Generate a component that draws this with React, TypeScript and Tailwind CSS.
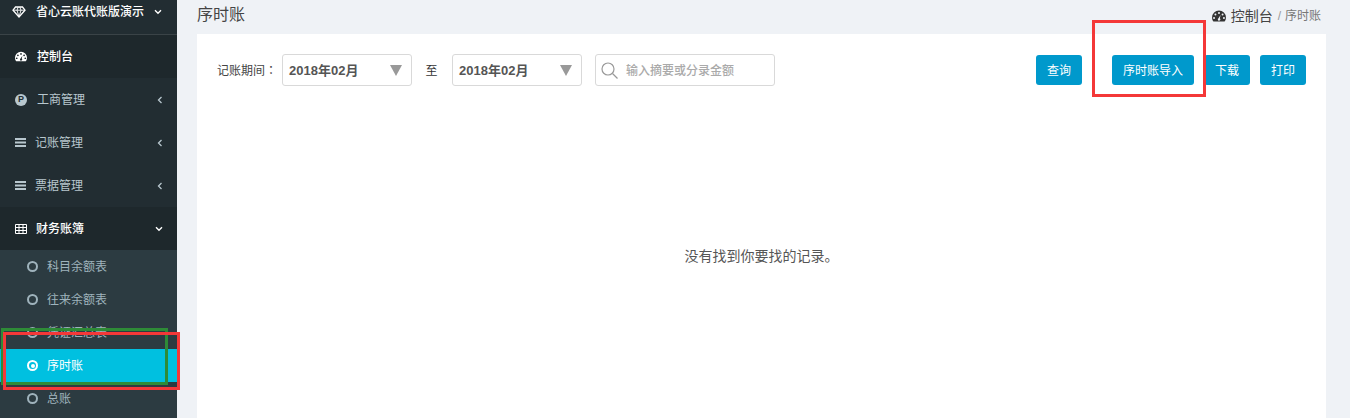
import React from "react";

const Diamond = () => (
  <svg width="14" height="12" viewBox="0 0 14 12" fill="none" stroke="#fff" strokeWidth="1.3">
    <path d="M3.5 1h7L13 4.2 7 11 1 4.2z" />
    <path d="M1 4.2h12M5 4.2 7 11l2-6.8M5 4.2 6.2 1M9 4.2 7.8 1" strokeWidth="0.9" />
  </svg>
);
const Gauge = ({ c = "#fff", s = 13 }: { c?: string; s?: number }) => (
  <svg width={s} height={s * 0.85} viewBox="0 0 14 12">
    <path fill={c} fillRule="evenodd" d="M7 .5A7 7 0 0 0 0 7.5c0 1.6.5 3 1.4 4h11.2c.9-1 1.4-2.4 1.4-4a7 7 0 0 0-7-7zM7 2a1 1 0 1 1 0 2 1 1 0 0 1 0-2zM3.4 3.6a1 1 0 1 1 0 2 1 1 0 0 1 0-2zM10.6 3.6a1 1 0 1 1 0 2 1 1 0 0 1 0-2zM2 7a1 1 0 1 1 0 2 1 1 0 0 1 0-2zM12 7a1 1 0 1 1 0 2 1 1 0 0 1 0-2zM8.6 5 7.9 8.4a1.3 1.3 0 1 1-1.4-.1z" />
  </svg>
);
const Bars = () => (
  <svg width="11" height="9" viewBox="0 0 11 9" fill="#b8c7ce">
    <rect y="0" width="11" height="2" />
    <rect y="3.5" width="11" height="2" />
    <rect y="7" width="11" height="2" />
  </svg>
);
const Table = () => (
  <svg width="12" height="10" viewBox="0 0 12 10" fill="none" stroke="#fff" strokeWidth="1">
    <path d="M.5.5h11v9H.5zM.5 3.5h11M.5 6.5h11M4 .5v9M8 .5v9" />
  </svg>
);
const PIcon = () => (
  <span className="flex h-[12px] w-[12px] items-center justify-center rounded-full bg-[#b8c7ce] text-[9px] font-bold leading-none text-[#222d32]">P</span>
);
const ChevDown = () => (
  <svg width="8" height="6" viewBox="0 0 8 6" fill="none" stroke="#fff" strokeWidth="1.4"><path d="M1 1.2 4 4.2l3-3" /></svg>
);
const ChevLeft = () => (
  <svg width="6" height="8" viewBox="0 0 6 8" fill="none" stroke="#b8c7ce" strokeWidth="1.3"><path d="M4.5 1 1.5 4l3 3" /></svg>
);
const Caret = () => (
  <svg width="12" height="11" viewBox="0 0 12 11" fill="#999"><path d="M0 0h12L6 11z" /></svg>
);

const NavItem = ({ icon, label, dark, white, gap = "mr-[10px]" }: { icon: React.ReactNode; label: string; dark?: boolean; white?: boolean; gap?: string }) => (
  <div className={`flex h-[43px] items-center pl-[15px] pr-[14px] ${dark ? "bg-[#1e282c]" : ""} ${white ? "font-medium text-white" : "text-[#b8c7ce]"}`}>
    <span className={`flex w-[12px] items-center justify-start ${gap}`}>{icon}</span>
    <span className="pt-[1px]">{label}</span>
    <span className="ml-auto flex items-center">{white ? (label === "财务账簿" ? <ChevDown /> : null) : <ChevLeft />}</span>
  </div>
);

const Sub = ({ label, active }: { label: string; active?: boolean }) => (
  <div className={`flex h-[33px] items-center pl-[27px] ${active ? "bg-[#00c0e0] text-white" : "text-[#9fb3bc]"}`}>
    <span className={`mr-[9px] flex h-[11px] w-[11px] items-center justify-center rounded-full border-2 ${active ? "border-white" : "border-[#9fb3bc]"}`}>
      {active && <span className="h-[4px] w-[4px] rounded-full bg-white" />}
    </span>
    <span className="pt-[1px]">{label}</span>
  </div>
);

const Select = () => (
  <div className="flex h-[32px] w-[130px] items-center justify-between rounded-[3px] border border-[#d9d9d9] bg-white pl-[6px] pr-[9px] text-[13px] font-bold text-[#555]">
    <span className="pt-[1px]">2018年02月</span>
    <Caret />
  </div>
);

const Btn = ({ label, className = "" }: { label: string; className?: string }) => (
  <div className={`flex h-[30px] items-center justify-center rounded-[3px] bg-[#0099cc] pt-[1px] text-[12px] text-white ${className}`}>{label}</div>
);

export default function App() {
  return (
    <div
      className="relative flex h-[418px] w-[1350px] overflow-hidden bg-[#eff2f6] text-[12px]"
      style={{ fontFamily: '"Liberation Sans", "Noto Sans CJK SC", sans-serif' }}
    >
      <aside className="flex w-[177px] shrink-0 flex-col bg-[#222d32]">
        <div className="flex h-[35px] items-center gap-[10px] border-b border-[#3a4347] pb-[11px] pl-[12px] font-medium text-white">
          <Diamond />
          <span className="whitespace-nowrap">省心云账代账版演示</span>
          <ChevDown />
        </div>
        <NavItem icon={<Gauge />} label="控制台" dark white />
        <NavItem icon={<PIcon />} label="工商管理" />
        <NavItem icon={<Bars />} label="记账管理" gap="mr-[8px]" />
        <NavItem icon={<Bars />} label="票据管理" gap="mr-[8px]" />
        <NavItem icon={<Table />} label="财务账簿" dark white gap="mr-[9px]" />
        <div className="flex-1 bg-[#2c3b41]">
          <Sub label="科目余额表" />
          <Sub label="往来余额表" />
          <Sub label="凭证汇总表" />
          <Sub label="序时账" active />
          <Sub label="总账" />
        </div>
      </aside>

      <main className="flex min-w-0 flex-1 flex-col pl-[20px] pr-[24px]">
        <div className="flex h-[34px] shrink-0 items-center justify-between pb-[4px]">
          <span className="text-[16px] leading-none text-[#444]">序时账</span>
          <div className="flex items-center pr-[5px] pt-[2px] text-[12px]">
            <Gauge c="#333" s={14} />
            <span className="ml-[5px] text-[14px] leading-none text-[#444]">控制台</span>
            <span className="ml-[5px] text-[#999]">/</span>
            <span className="ml-[4px] text-[#777]">序时账</span>
          </div>
        </div>
        <div className="flex flex-1 flex-col bg-white">
          <div className="flex items-center pl-[20px] pr-[20px] pt-[20px]">
            <span className="mr-[7px] w-[58px] whitespace-nowrap pt-[1px] text-[#444]">
              记账期间<span className="font-['Noto_Sans_CJK_TC']">：</span>
            </span>
            <Select />
            <span className="w-[40px] pt-[1px] pr-[1px] text-center text-[#333]">至</span>
            <Select />
            <div className="ml-[13px] flex h-[32px] w-[180px] items-center rounded-[3px] border border-[#d9d9d9] pl-[5px] text-[#aaa]">
              <svg width="17" height="17" viewBox="0 0 17 17" fill="none" stroke="#999" strokeWidth="1.2">
                <circle cx="7" cy="7" r="6" />
                <path d="m11.5 11.5 5 5" />
              </svg>
              <span className="ml-[8px] pt-[1px] font-medium">输入摘要或分录金额</span>
            </div>
            <Btn label="查询" className="ml-auto w-[46px]" />
            <Btn label="序时账导入" className="ml-[30px] w-[82px]" />
            <Btn label="下载" className="ml-[10px] w-[46px]" />
            <Btn label="打印" className="ml-[10px] w-[46px]" />
          </div>
          <div className="mt-[160px] text-center text-[14px] text-[#555]">没有找到你要找的记录。</div>
        </div>
      </main>

      <div className="absolute left-[1px] top-[328px] h-[57px] w-[167px] border-[3px] border-[#2e8b37]" />
      <div className="absolute left-[3px] top-[332px] h-[58px] w-[177px] border-[3px] border-[#f43838]" />
      <div className="absolute left-[1092px] top-[20px] h-[77px] w-[114px] border-[3px] border-[#f43838]" />
    </div>
  );
}
